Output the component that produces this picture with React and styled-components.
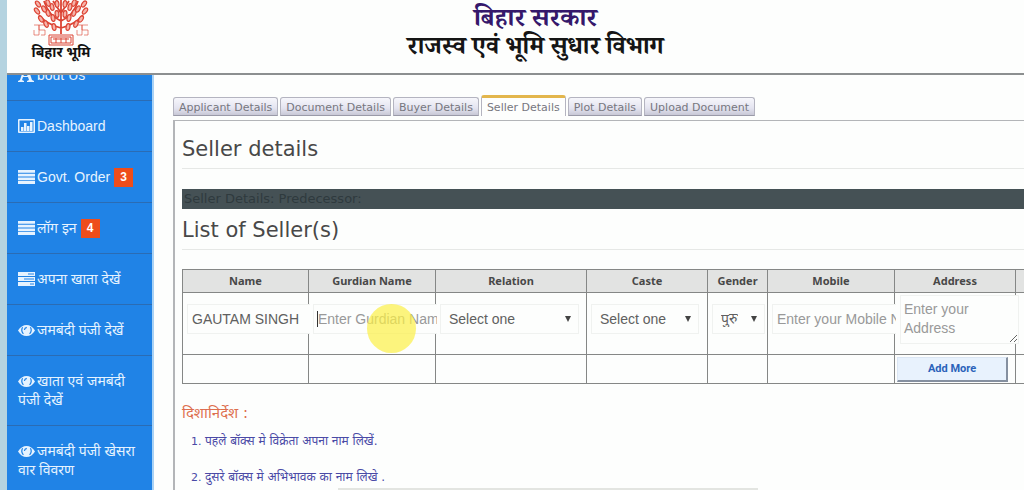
import React, { useState } from 'react'
import styled, { createGlobalStyle } from 'styled-components'

const GlobalStyle = createGlobalStyle`
  * { box-sizing: border-box; }
  body {
    margin: 0;
    overflow: hidden;
    background: #fdfefd;
    font-family: "Liberation Sans", "Noto Sans", sans-serif;
    font-size: 14px;
    color: #555;
  }
`

const Page = styled.div`
  display: flex;
  flex-direction: column;
  height: 100vh;
  overflow: hidden;
  border-left: 7px solid #b4d3e0;
`

const Header = styled.header`
  display: grid;
  grid-template-columns: 108px 1fr 68px;
  flex: none;
  height: 75px;
  overflow: hidden;
  background: #fdfefd;
  border-bottom: 2px solid #8c8f90;
`

const Brand = styled.div`
  display: flex;
  flex-direction: column;
  align-items: center;
  color: #111;
  font: bold 14px/12px "Noto Sans", sans-serif;
`

const Titles = styled.div`
  padding-top: 3px;
  text-align: center;
  font-family: "Liberation Serif", "Noto Serif Devanagari", serif;
`

const State = styled.h1`
  margin: 0;
  color: #35186b;
  font-size: 26px;
  line-height: 29px;
`

const Department = styled.h2`
  margin: 0;
  color: #151515;
  font-size: 25px;
  line-height: 28px;
`

const Body = styled.div`
  display: flex;
  flex: 1;
  min-height: 0;
  overflow: hidden;
`

const Sidebar = styled.nav`
  flex: none;
  width: 147px;
  background: #2083e6;
  border-right: 2px solid #a9d2f5;
`

const Menu = styled.ul`
  margin: -25px 0 0;
  padding: 0;
  list-style: none;
`

const MenuItem = styled.li`
  border-bottom: 1px solid #2b6cb3;
`

const MenuLink = styled.a`
  display: block;
  padding: 16px 8px 15px 11px;
  color: #e6f3ff;
  line-height: 19px;
  text-decoration: none;

  svg {
    margin-right: 2px;
    vertical-align: -2px;
  }
`

const Badge = styled.span`
  display: inline-block;
  width: 19px;
  margin-left: 4px;
  background: #ee4d1b;
  color: #fff;
  font-size: 12px;
  font-weight: bold;
  text-align: center;
  vertical-align: top;
`

const Main = styled.main`
  flex: 1;
  min-width: 0;
  overflow: hidden;
  padding: 20px 0 0 19px;
  font-family: "DejaVu Sans", "Noto Sans", sans-serif;
`

const Tabs = styled.div`
  display: flex;
  align-items: flex-end;
  gap: 2px;
  height: 21px;
`

const Tab = styled.button`
  height: ${props => (props.$active ? '21px' : '19px')};
  padding: 2px 5px 0;
  border: 1px solid #b4b4c0;
  border-top: ${props => (props.$active ? '3px solid #e3b64c' : '1px solid #b4b4c0')};
  border-bottom: ${props => (props.$active ? '0' : '1px solid #9a9aa8')};
  border-radius: 3px 3px 0 0;
  background: ${props => (props.$active ? '#fdfefd' : 'linear-gradient(#f6f6fb, #e4e4f0 60%, #c8c8d6)')};
  color: #77777f;
  font: 11px/14px "DejaVu Sans", sans-serif;
  white-space: nowrap;
`

const Panel = styled.section`
  height: 400px;
  margin-top: 4px;
  padding: 12px 0 0 7px;
  border: 1px solid #b3b5b8;
  border-width: 1px 0 0 2px;
`

const Heading = styled.h3`
  margin: 0;
  padding-bottom: 3px;
  border-bottom: 1px solid #e6e8e6;
  color: #484848;
  font-size: 21px;
  font-weight: normal;
  line-height: 32px;
`

const Banner = styled.div`
  margin: 20px 0 5px;
  padding-left: 2px;
  background: #455155;
  color: #2f3a3e;
  font-size: 13px;
  line-height: 20px;
`

const SellerTable = styled.table`
  width: 1013px;
  margin-top: 19px;
  border-collapse: collapse;
  table-layout: fixed;

  th, td {
    padding: 0;
    border: 1px solid #858786;
  }
  th {
    height: 23px;
    background: #e2e3e2;
    color: #484848;
    font: bold 11px/14px "Noto Sans", sans-serif;
  }
`

const Row = styled.tr`
  height: ${props => (props.$tall ? '62px' : '29px')};
`

const Cell = styled.td`
  vertical-align: top;
`

const Control = styled.div`
  position: relative;
  width: ${props => props.$width};
  margin: ${props => (props.$area ? '2px 0 0 5px' : '11px 0 0 4px')};
`

const fieldStyle = `
  display: block;
  width: 100%;
  margin: 0;
  border: 1px solid #f0f2f0;
  outline: none;
  background: #fdfefd;
  color: #606060;
  font-family: "Liberation Sans", "Noto Sans", sans-serif;
  font-size: 14px;

  &::placeholder { color: #999; opacity: 1; }
`

const Input = styled.input`
  ${fieldStyle}
  height: 30px;
  padding: 0 0 0 4px;
  border-right: 0;
`

const Select = styled.select`
  ${fieldStyle}
  height: 30px;
  padding: 0 26px 0 8px;
  appearance: none;
`

const Arrow = styled.svg`
  position: absolute;
  top: 12px;
  right: 8px;
  pointer-events: none;
`

const Area = styled.textarea`
  ${fieldStyle}
  height: 49px;
  padding: 4px 3px;
  overflow: hidden;
  line-height: 19px;
`

const Caret = styled.span`
  position: absolute;
  top: 7px;
  left: 4px;
  width: 1px;
  height: 16px;
  background: #333;
`

const Pointer = styled.span`
  position: absolute;
  top: 0;
  left: 54px;
  width: 49px;
  height: 49px;
  border-radius: 50%;
  background: rgba(251, 240, 70, 0.7);
  pointer-events: none;
  z-index: 2;
`

const AddButton = styled.button`
  display: block;
  width: 111px;
  height: 25px;
  margin: 2px 0 0 2px;
  border: 1px solid #dbe6f4;
  border-right: 2px solid #8590a0;
  border-bottom: 2px solid #8590a0;
  background: #e8f2fd;
  color: #2a62ba;
  font: bold 11px/14px Roboto, sans-serif;
`

const Guide = styled.h4`
  margin: 19px 0 0;
  color: #dd6f4f;
  font-size: 15px;
  font-weight: normal;
  line-height: 20px;
`

const Steps = styled.ol`
  margin: 10px 0 0;
  padding-left: 23px;
  color: #4a4aa6;
  font-size: 12px;
  line-height: 16px;

  li { margin-bottom: 20px; }
  li::marker { font-size: 11px; }
`

const BottomEdge = styled.div`
  position: fixed;
  bottom: 0;
  left: 33%;
  right: 26%;
  height: 2px;
  background: #e3e5e1;
`

const TreeLogo = () => (
  <svg width="56" height="46" viewBox="0 0 56 46" fill="none" stroke="#dc4434" strokeWidth="1.8" aria-hidden="true">
    <path d="M28 34V0M28 28C20 26 12 22 6 15M28 28C36 26 44 22 50 15M28 21C21 18 14 11 11 1M28 21C35 18 42 11 45 1M28 13L20 1M28 13L36 1" />
    <g fill="#f6b3a9" strokeWidth="1.2">
      {[[4, 11], [8, 19], [5, 4], [13, 24], [15, 13], [19, 7], [20, 18], [11, 9], [21, 27], [52, 11], [48, 19], [51, 4], [43, 24], [41, 13], [37, 7], [36, 18], [45, 9], [35, 27], [24, 4], [32, 4], [15, 3], [41, 3], [24, 14], [32, 14]].map(([x, y]) => (
        <ellipse key={`${x}-${y}`} cx={x} cy={y} rx="1.9" ry="3.4" transform={`rotate(${(28 - x) * -1.6} ${x} ${y})`} />
      ))}
    </g>
    <path d="M16 35H40V45H16ZM18 37H38V43H18ZM20 39H36M23 38V43M28 38V43M33 38V43" strokeWidth="1" />
    <path d="M1 25H6V30H12M6 25V35M1 30V35H6M6 25H12M12 30V35H8M44 25H49V30H55M49 25V35M44 30V35H49M49 25H55M55 30V35H51" strokeWidth="1" opacity=".6" />
  </svg>
)

const icons = {
  font: <path fillRule="evenodd" d="M0 14V13L2 12L6 0H10L14 12L16 13V14H9V13L11 12L10 9H5L4 12L6 13V14ZM5.500 8H9.500L7.500 2Z" />,
  chart: <path fillRule="evenodd" d="M1 0H16Q17 0 17 1V13Q17 14 16 14H1Q0 14 0 13V1Q0 0 1 0ZM1.500 1.500V12.500H15.500V1.500ZM3 8H5.500V12H3ZM6 4H8.500V12H6ZM9 7H11.500V12H9ZM12 3H14.500V12H12Z" />,
  list: <path d="M0 0H17V2.800H0ZM0 3.700H17V6.500H0ZM0 7.400H17V10.200H0ZM0 11.100H17V13.900H0Z" />,
  tasks: <path fillRule="evenodd" d="M0 0H17V4H0ZM0 5H17V9H0ZM0 10H17V14H0ZM10 1.500V2.500H16V1.500ZM6 6.500V7.500H16V6.500ZM12 11.500V12.500H16V11.500Z" />,
  eye: (
    <>
      <path d="M0 7.500Q3.500 2 8.500 2T17 7.500Q13.500 13 8.500 13T0 7.500Z" />
      <path d="M4.600 4.200Q2.600 7.500 5.400 10.800M12.400 4.200Q14.400 7.500 11.600 10.800M8.800 4.300Q6.600 4.800 6.400 7" fill="none" stroke="#2083e6" strokeWidth="1.200" />
    </>
  ),
}

const Icon = ({ name }) => (
  <svg width="17" height="14" viewBox="0 0 17 14" fill="#e6f3ff" aria-hidden="true">{icons[name]}</svg>
)

const menu = [
  { icon: 'font', text: 'bout Us' },
  { icon: 'chart', text: 'Dashboard' },
  { icon: 'list', text: 'Govt. Order', count: 3 },
  { icon: 'list', text: 'लॉग इन', count: 4 },
  { icon: 'tasks', text: 'अपना खाता देखें' },
  { icon: 'eye', text: 'जमबंदी पंजी देखें' },
  { icon: 'eye', text: 'खाता एवं जमबंदी पंजी देखें' },
  { icon: 'eye', text: 'जमबंदी पंजी खेसरा वार विवरण' },
]

const tabs = ['Applicant Details', 'Document Details', 'Buyer Details', 'Seller Details', 'Plot Details', 'Upload Document']

const columns = [
  { title: 'Name', width: 126 },
  { title: 'Gurdian Name', width: 127 },
  { title: 'Relation', width: 151 },
  { title: 'Caste', width: 121 },
  { title: 'Gender', width: 60 },
  { title: 'Mobile', width: 127 },
  { title: 'Address', width: 121 },
  { title: '', width: 180 },
]

const Dropdown = ({ label, option, width }) => (
  <Control $width={width}>
    <Select aria-label={label}>
      <option>{option}</option>
    </Select>
    <Arrow width="6" height="6" viewBox="0 0 6 6" fill="#444"><path d="M0 0H6L3 6Z" /></Arrow>
  </Control>
)

const App = () => {
  const [active, setActive] = useState('Seller Details')

  return (
    <>
      <GlobalStyle />
      <Page>
        <Header>
          <Brand>
            <TreeLogo />
            बिहार भूमि
          </Brand>
          <Titles>
            <State>बिहार सरकार</State>
            <Department>राजस्व एवं भूमि सुधार विभाग</Department>
          </Titles>
        </Header>
        <Body>
          <Sidebar>
            <Menu>
              {menu.map(item => (
                <MenuItem key={item.text}>
                  <MenuLink href="#">
                    <Icon name={item.icon} />
                    {item.text}
                    {item.count && <Badge>{item.count}</Badge>}
                  </MenuLink>
                </MenuItem>
              ))}
            </Menu>
          </Sidebar>
          <Main>
            <Tabs role="tablist">
              {tabs.map(tab => (
                <Tab key={tab} role="tab" aria-selected={tab === active} $active={tab === active} onClick={() => setActive(tab)}>{tab}</Tab>
              ))}
            </Tabs>
            <Panel>
              <Heading>Seller details</Heading>
              <Banner>Seller Details: Predecessor:</Banner>
              <Heading>List of Seller(s)</Heading>
              <SellerTable>
                <colgroup>
                  {columns.map(col => <col key={col.title} width={col.width} />)}
                </colgroup>
                <thead>
                  <tr>{columns.map(col => <th key={col.title}>{col.title}</th>)}</tr>
                </thead>
                <tbody>
                  <Row $tall>
                    <Cell><Control $width="123px"><Input aria-label="Name" defaultValue="GAUTAM SINGH" /></Control></Cell>
                    <Cell>
                      <Control $width="124px">
                        <Input aria-label="Gurdian Name" placeholder="Enter Gurdian Name" />
                        <Caret />
                        <Pointer />
                      </Control>
                    </Cell>
                    <Cell><Dropdown label="Relation" option="Select one" width="139px" /></Cell>
                    <Cell><Dropdown label="Caste" option="Select one" width="108px" /></Cell>
                    <Cell><Dropdown label="Gender" option="पुरुष" width="53px" /></Cell>
                    <Cell><Control $width="124px"><Input aria-label="Mobile" placeholder="Enter your Mobile No" /></Control></Cell>
                    <Cell><Control $area $width="119px"><Area aria-label="Address" placeholder="Enter your Address" /></Control></Cell>
                    <Cell />
                  </Row>
                  <Row>
                    {columns.map(col => (
                      <Cell key={col.title}>{col.title === 'Address' && <AddButton>Add More</AddButton>}</Cell>
                    ))}
                  </Row>
                </tbody>
              </SellerTable>
              <Guide>दिशानिर्देश :</Guide>
              <Steps>
                <li>पहले बॉक्स मे विक्रेता अपना नाम लिखें.</li>
                <li>दुसरे बॉक्स मे अभिभावक का नाम लिखे .</li>
              </Steps>
            </Panel>
          </Main>
        </Body>
        <BottomEdge />
      </Page>
    </>
  )
}

export default App
